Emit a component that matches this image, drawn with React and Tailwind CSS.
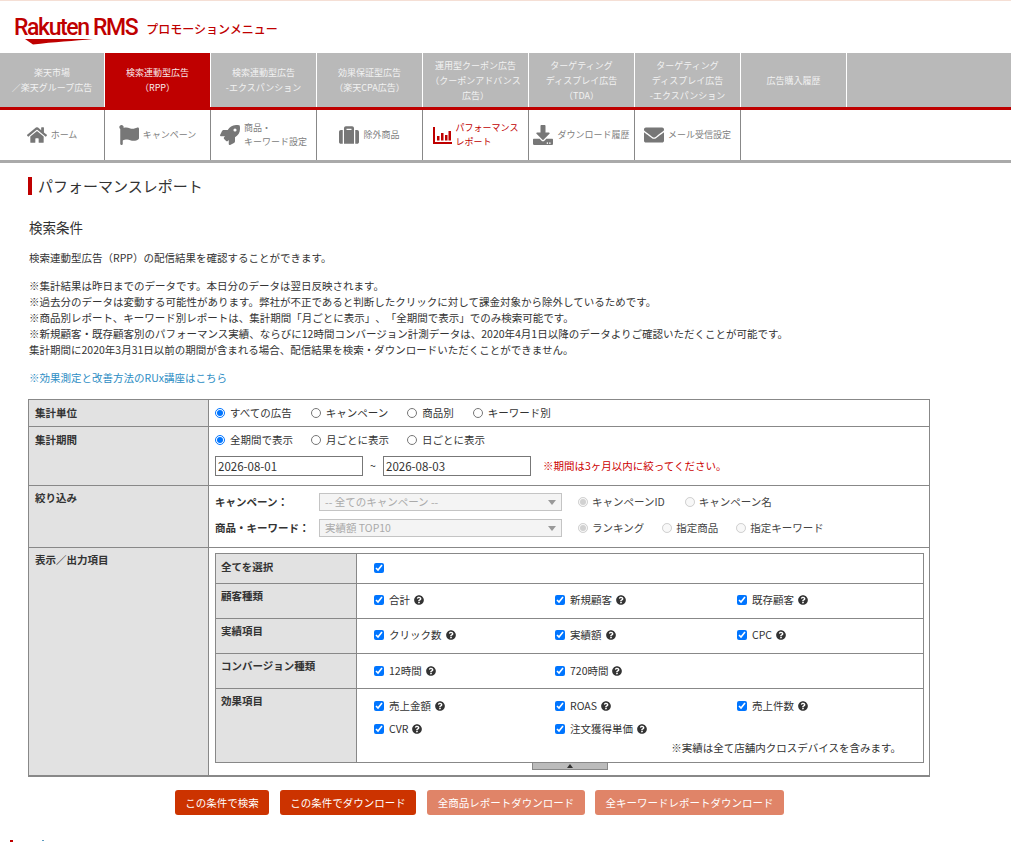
import React from 'react';
import { FaHome, FaFlag, FaRocket, FaSuitcase, FaDownload, FaEnvelope, FaQuestionCircle } from 'react-icons/fa';

const tabs = [
  ['楽天市場', '／楽天グループ広告'],
  ['検索連動型広告', '（RPP）'],
  ['検索連動型広告', '-エクスパンション'],
  ['効果保証型広告', '（楽天CPA広告）'],
  ['運用型クーポン広告', '（クーポンアドバンス', '広告）'],
  ['ターゲティング', 'ディスプレイ広告', '（TDA）'],
  ['ターゲティング', 'ディスプレイ広告', '-エクスパンション'],
  ['広告購入履歴'],
];

function ChartIcon() {
  return (
    <svg width="19" height="17" viewBox="0 0 19 17" fill="currentColor">
      <path d="M0 0h2v15h17v2H0z" />
      <path d="M4 9h2.500v4.500H4zM8 6h2.500v7.500H8zM12 8h2.500v5.500H12zM15.500 4H18v9.500h-2.500z" />
    </svg>
  );
}

const navItems = [
  { label: ['ホーム'], icon: <FaHome size={20} /> },
  { label: ['キャンペーン'], icon: <FaFlag size={20} /> },
  { label: ['商品・', 'キーワード設定'], icon: <FaRocket size={20} /> },
  { label: ['除外商品'], icon: <FaSuitcase size={20} /> },
  { label: ['パフォーマンス', 'レポート'], icon: <ChartIcon />, active: true },
  { label: ['ダウンロード履歴'], icon: <FaDownload size={20} /> },
  { label: ['メール受信設定'], icon: <FaEnvelope size={20} /> },
];

const notes = [
  '※集計結果は昨日までのデータです。本日分のデータは翌日反映されます。',
  '※過去分のデータは変動する可能性があります。弊社が不正であると判断したクリックに対して課金対象から除外しているためです。',
  '※商品別レポート、キーワード別レポートは、集計期間「月ごとに表示」、「全期間で表示」でのみ検索可能です。',
  '※新規顧客・既存顧客別のパフォーマンス実績、ならびに12時間コンバージョン計測データは、2020年4月1日以降のデータよりご確認いただくことが可能です。',
  '集計期間に2020年3月31日以前の期間が含まれる場合、配信結果を検索・ダウンロードいただくことができません。',
];

function Radio({ name, label, checked, disabled }) {
  return (
    <label className={`flex items-center ${disabled ? 'gap-[4px] text-[#444]' : 'gap-[5px]'}`}>
      <input type="radio" name={name} defaultChecked={checked} disabled={disabled} className="m-0 w-[10px] h-[10px]" />
      <span>{label}</span>
    </label>
  );
}

function Check({ label, help = true }) {
  return (
    <label className="flex items-center h-[16px]">
      <input type="checkbox" defaultChecked className="m-0 w-[10px] h-[10px] mr-[5px]" />
      {label && <span>{label}</span>}
      {help && <FaQuestionCircle size={10} className="ml-[4px] text-[#333]" />}
    </label>
  );
}

function Row({ label, className, labelPad = 'pt-[5px]', children }) {
  return (
    <div className={`flex border-b border-[#888] last:border-b-0 ${className}`}>
      <div className={`w-[180px] shrink-0 bg-[#e2e2e2] border-r border-[#888] pl-[6px] font-bold text-[#333] ${labelPad}`}>{label}</div>
      <div className="flex-1 min-w-0 pl-[6px]">{children}</div>
    </div>
  );
}

function InnerRow({ label, className, labelPad = 'pt-[4px]', pad, children }) {
  return (
    <div className={`flex border-b border-[#888] last:border-b-0 ${className}`}>
      <div className={`w-[141px] shrink-0 bg-[#e2e2e2] border-r border-[#888] pl-[5px] font-bold text-[#333] ${labelPad}`}>{label}</div>
      <div className={`flex-1 min-w-0 pl-[17px] ${pad}`}>{children}</div>
    </div>
  );
}

function Cols({ children }) {
  return <div className="grid grid-cols-[181px_182px_1fr]">{children}</div>;
}

function FakeSelect({ value }) {
  return (
    <div className="w-[243px] h-[18px] border border-[#c4c4c4] bg-[#f4f4f4] text-[#aaa] flex items-center justify-between pl-[5px] pr-[3px]">
      <span>{value}</span>
      <span className="w-0 h-0 border-x-[4px] border-x-transparent border-t-[5px] border-t-[#999] mr-[2px]" />
    </div>
  );
}

export default function App() {
  return (
    <div className="h-[843px] overflow-hidden bg-white text-[10.5px] leading-[16px] text-[#333] [text-spacing-trim:space-all]" style={{ fontFamily: '"Noto Sans CJK JP", "Noto Sans", sans-serif' }}>
      <div className="h-px bg-[#f5dfd5]" />

      {/* logo */}
      <div className="h-[52px] pl-[14px] flex items-start pt-[13px]">
        <div className="relative">
          <span className="text-[#bf0000] text-[23px] leading-[27px] tracking-[-1.400px] font-medium" style={{ fontFamily: 'Roboto, sans-serif' }}>Rakuten RMS</span>
          <svg className="absolute left-[11px] top-[25px]" width="70" height="6" viewBox="0 0 70 6" fill="#bf0000">
            <path d="M0 0 L68 0 C50 2 28 3 8 5.500z" />
          </svg>
        </div>
        <span className="ml-[9px] mt-[6px] text-[#bf0000] text-[12px] leading-[18px] font-medium">プロモーションメニュー</span>
      </div>

      {/* ad type tabs */}
      <div className="flex h-[54px] bg-[#b9b9b9]">
        {tabs.map((t, i) => (
          <div key={i} className={`${i === 0 ? 'w-[105px]' : 'w-[106px]'} border-r border-white flex flex-col items-center justify-center text-[9px] leading-[15px] ${i === 1 ? 'bg-[#bf0000] text-[#f8e8e8]' : 'text-[#f2f2f2]'}`}>
            {t.map(line => <span key={line}>{line}</span>)}
          </div>
        ))}
      </div>
      <div className="h-[3px] bg-[#bf0000]" />

      {/* sub menu */}
      <div className="flex h-[53px] border-b-[3px] border-[#aaa]">
        {navItems.map((n, i) => (
          <div key={i} className={`${i === 0 ? 'w-[105px]' : 'w-[106px]'} border-r border-[#888] flex items-center justify-center gap-[4px] text-[9px] leading-[14px] ${n.active ? 'text-[#bf0000]' : 'text-[#808080]'}`}>
            <span className={`shrink-0 ${n.active ? 'text-[#bf0000]' : 'text-[#777]'}`}>{n.icon}</span>
            <span className="whitespace-nowrap">{n.label.map(l => <span key={l} className="block">{l}</span>)}</span>
          </div>
        ))}
      </div>

      <div className="pl-[28px] w-[930px]">
        <h1 className="mt-[14px] h-[18px] border-l-4 border-[#bf0000] pl-[6px] text-[15px] leading-[18px] font-normal">パフォーマンスレポート</h1>
        <h2 className="mt-[22px] pl-px text-[13.500px] leading-[20px] font-normal">検索条件</h2>

        <p className="mt-[13px] pl-px">検索連動型広告（RPP）の配信結果を確認することができます。</p>
        <div className="mt-[12px] pl-px">
          {notes.map(n => <p key={n} className="h-[16px] whitespace-nowrap">{n}</p>)}
        </div>
        <a className="block mt-[12px] pl-px text-[#2d8dc4]">※効果測定と改善方法のRUx講座はこちら</a>

        {/* search form */}
        <div className="relative mt-[13px] border border-[#888]">
          <Row label="集計単位" className="h-[27px]">
            <div className="flex items-center gap-[19px] h-full pb-px">
              <Radio name="unit" label="すべての広告" checked />
              <Radio name="unit" label="キャンペーン" />
              <Radio name="unit" label="商品別" />
              <Radio name="unit" label="キーワード別" />
            </div>
          </Row>
          <Row label="集計期間" className="h-[59px]">
            <div className="flex items-center gap-[18px] pt-[5px]">
              <Radio name="period" label="全期間で表示" checked />
              <Radio name="period" label="月ごとに表示" />
              <Radio name="period" label="日ごとに表示" />
            </div>
            <div className="flex items-center mt-[8px]">
              <input readOnly value="2026-08-01" className="w-[148px] h-[20px] border border-[#777] px-[2px] text-[11.500px] outline-none" />
              <span className="w-[20px] text-center">~</span>
              <input readOnly value="2026-08-03" className="w-[148px] h-[20px] border border-[#777] px-[2px] text-[11.500px] outline-none" />
              <span className="ml-[12px] text-[#cc0000]">※期間は3ヶ月以内に絞ってください。</span>
            </div>
          </Row>
          <Row label="絞り込み" className="h-[62px]" labelPad="pt-[4px]">
            <div className="flex items-center pt-[7px]">
              <span className="w-[104px] font-bold">キャンペーン：</span>
              <FakeSelect value="-- 全てのキャンペーン --" />
              <div className="flex gap-[20px] ml-[16px]">
                <Radio name="c" label="キャンペーンID" checked disabled />
                <Radio name="c" label="キャンペーン名" disabled />
              </div>
            </div>
            <div className="flex items-center mt-[8px]">
              <span className="w-[104px] font-bold">商品・キーワード：</span>
              <FakeSelect value="実績額 TOP10" />
              <div className="flex gap-[18px] ml-[16px]">
                <Radio name="k" label="ランキング" checked disabled />
                <Radio name="k" label="指定商品" disabled />
                <Radio name="k" label="指定キーワード" disabled />
              </div>
            </div>
          </Row>
          <Row label="表示／出力項目" className="h-[228px]" labelPad="pt-[4px]">
            <div className="mt-[5px] w-[709px] border border-[#888]">
              <InnerRow label="全てを選択" className="h-[30px]" labelPad="pt-[5px]" pad="pt-[6px]">
                <Check help={false} />
              </InnerRow>
              <InnerRow label="顧客種類" className="h-[35px]" pad="pt-[8px]">
                <Cols>
                  <Check label="合計" />
                  <Check label="新規顧客" />
                  <Check label="既存顧客" />
                </Cols>
              </InnerRow>
              <InnerRow label="実績項目" className="h-[35px]" pad="pt-[8px]">
                <Cols>
                  <Check label="クリック数" />
                  <Check label="実績額" />
                  <Check label="CPC" />
                </Cols>
              </InnerRow>
              <InnerRow label="コンバージョン種類" className="h-[35px]" pad="pt-[9px]">
                <Cols>
                  <Check label="12時間" />
                  <Check label="720時間" />
                </Cols>
              </InnerRow>
              <InnerRow label="効果項目" className="h-[73px]" pad="pt-[9px]">
                <Cols>
                  <Check label="売上金額" />
                  <Check label="ROAS" />
                  <Check label="売上件数" />
                </Cols>
                <div className="mt-[7px]">
                  <Cols>
                    <Check label="CVR" />
                    <Check label="注文獲得単価" />
                  </Cols>
                </div>
                <p className="text-right pr-[22px] mt-[3px]">※実績は全て店舗内クロスデバイスを含みます。</p>
              </InnerRow>
            </div>
          </Row>
          {/* collapse handle */}
          <div className="absolute left-[503px] bottom-[6px] w-[76px] h-[7px] bg-[#bbb] border border-t-0 border-[#888] flex items-center justify-center">
            <span className="w-0 h-0 border-x-[3px] border-x-transparent border-b-[4px] border-b-[#333]" />
          </div>
        </div>

        {/* actions */}
        <div className="flex mt-[13px] ml-[147px] gap-[11px] text-white">
          <button className="w-[94px] h-[25px] rounded-[3px] bg-[#cc3300]">この条件で検索</button>
          <button className="w-[136px] h-[25px] rounded-[3px] bg-[#cc3300]">この条件でダウンロード</button>
          <button className="w-[158px] h-[25px] rounded-[3px] bg-[#e08468]">全商品レポートダウンロード</button>
          <button className="w-[189px] h-[25px] rounded-[3px] bg-[#e08468] -ml-[1px]">全キーワードレポートダウンロード</button>
        </div>
      </div>

      {/* top of the footer logo, cut off by the window */}
      <div className="flex mt-[25px] pl-[10px]">
        <span className="w-[3px] h-[2px] bg-[#bf0000]" />
        <span className="ml-[29px] w-[2px] h-[1px] bg-[#5b9bc0]" />
      </div>
    </div>
  );
}
